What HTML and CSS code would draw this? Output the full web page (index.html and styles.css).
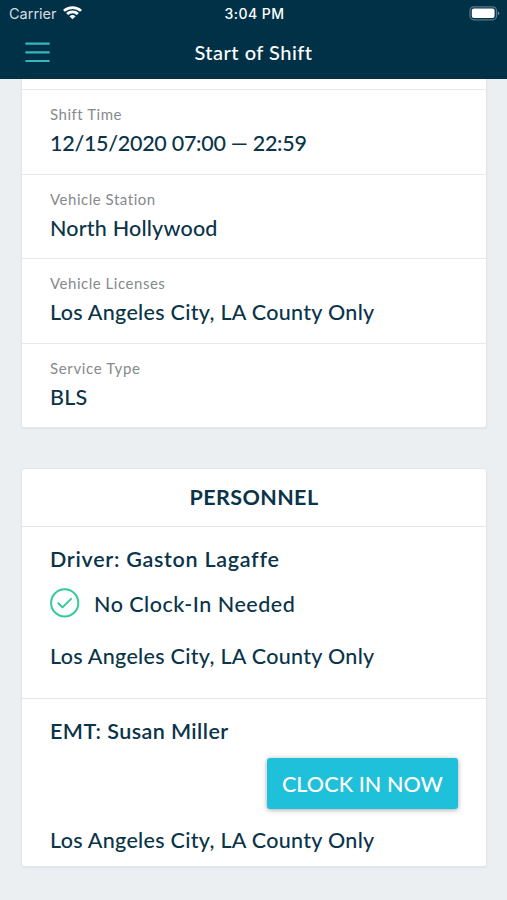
FILE: index.html
```html
<!DOCTYPE html>
<html lang="en">
<head>
<meta charset="utf-8">
<title>Start of Shift</title>
<link rel="stylesheet" href="styles.css">
</head>
<body>
<header class="header">
  <div class="status">
    <div class="carrier"><span>Carrier</span>
      <svg class="wifi" width="19" height="14" viewBox="0 0 18 14" preserveAspectRatio="none" fill="none" stroke="#fff" stroke-width="2.7"><path d="M.9 4.9a11.6 11.6 0 0 1 16.2 0M3.9 8a7.3 7.3 0 0 1 10.2 0"/><path d="M9 13.2 6.1 10.3a4.2 4.2 0 0 1 5.8 0z" fill="#fff" stroke="none"/></svg>
    </div>
    <div class="time">3:04 PM</div>
    <svg class="battery" width="31" height="15" viewBox="0 0 31 15"><rect x="1" y=".8" width="26.5" height="13" rx="3.8" fill="none" stroke="#58788a" stroke-width="1.2"/><rect x="2.8" y="2.6" width="22.8" height="9.4" rx="2" fill="#fff"/><path d="M28.8 5.2q3 2.1 0 4.2z" fill="#6f8b99"/></svg>
  </div>
  <div class="nav">
    <svg class="menu" width="25" height="21" viewBox="0 0 25 21" stroke="#35b5bd" stroke-width="2.2" stroke-linecap="round"><path d="M1.2 1.7h22.6M1.2 10.4h22.6M1.2 19h22.6"/></svg>
    <h1 class="title">Start of Shift</h1>
  </div>
</header>
<main class="content">
  <section class="card details">
    <div class="field"><div class="label">Shift Time</div><div class="value date">12/15/2020 07:00 — 22:59</div></div>
    <div class="field"><div class="label">Vehicle Station</div><div class="value place">North Hollywood</div></div>
    <div class="field"><div class="label">Vehicle Licenses</div><div class="value">Los Angeles City, LA County Only</div></div>
    <div class="field"><div class="label service">Service Type</div><div class="value place">BLS</div></div>
  </section>
  <section class="card personnel">
    <h2 class="heading">PERSONNEL</h2>
    <div class="person driver">
      <div class="name gaston">Driver: Gaston Lagaffe</div>
      <div class="clock">
        <svg width="30" height="30" viewBox="0 0 30 30" fill="none" stroke="#35cb95" stroke-width="2" stroke-linecap="round" stroke-linejoin="round"><circle cx="14.7" cy="14.9" r="13.6"/><path d="m8.3 15.3 4.2 4.1 8.6-8.5"/></svg>
        <span class="value needed">No Clock-In Needed</span>
      </div>
      <div class="value">Los Angeles City, LA County Only</div>
    </div>
    <div class="person emt">
      <div class="name">EMT: Susan Miller</div>
      <button class="button" type="button">CLOCK IN NOW</button>
      <div class="value">Los Angeles City, LA County Only</div>
    </div>
  </section>
</main>
</body>
</html>
```
FILE: styles.css
```css
* { box-sizing: border-box; }
body {
  margin: 0;
  height: 900px;
  overflow: hidden;
  background: #ebeff2;
  color: #0a3449;
  font-family: Lato, "Liberation Sans", sans-serif;
  white-space: nowrap;
}
.header { height: 79px; background: #003147; color: #fff; }
.status {
  display: grid;
  grid-template-columns: 1fr auto 1fr;
  align-items: center;
  height: 27px;
  padding: 0 7px 0 9px;
  font: 14.5px/27px Inter, sans-serif;
}
.carrier { display: flex; align-items: center; gap: 6px; color: #d5dde1; }
.wifi { margin-top: -2px; }
.time { font-size: 14px; font-weight: 500; letter-spacing: .5px; }
.battery { justify-self: end; }
.nav {
  display: grid;
  grid-template-columns: 25px 1fr 25px;
  align-items: center;
  height: 50px;
  padding: 0 25px;
}
.title { margin: 0; text-align: center; font-size: 20px; line-height: 50px; font-weight: 500; letter-spacing: .5px; }
.content { padding: 0 20px 0 21px; }
.card {
  background: #fff;
  border: 1px solid #e2e6e8;
  border-radius: 3px;
  box-shadow: 0 1px 2px rgba(0, 0, 0, .05);
}
.details { height: 349px; padding-top: 10px; border-top: 0; border-radius: 0 0 3px 3px; }
.field { height: 84.6px; padding: 14px 28px 0; border-top: 1px solid #e7eaeb; }
.label { color: #858a8d; font-size: 15px; line-height: 20px; letter-spacing: .53px; }
.service { letter-spacing: .65px; }
.value, .name { font-size: 21.5px; line-height: 30px; font-weight: 500; letter-spacing: .3px; }
.field .value { margin-top: 4px; }
.value.date { letter-spacing: -.28px; }
.value.place { letter-spacing: .2px; }
.value.needed { letter-spacing: .5px; }
.personnel { height: 399px; margin-top: 40px; }
.heading { margin: 0; height: 57px; text-align: center; font-size: 21.5px; line-height: 56px; font-weight: 700; letter-spacing: .4px; }
.person { padding: 0 28px; border-top: 1px solid #e2e6e8; }
.driver { height: 172px; padding-top: 17px; }
.name { font-weight: 600; letter-spacing: .43px; }
.gaston { letter-spacing: .71px; }
.clock { display: flex; align-items: center; gap: 14px; height: 30px; margin: 14px 0 23px; }
.needed { padding-top: 1px; }
.emt { display: flex; flex-direction: column; padding-top: 17px; }
.button {
  align-self: flex-end;
  width: 191px;
  height: 51px;
  margin: 12px 0 16px;
  padding: 0;
  border: 0;
  border-radius: 3px;
  background: #1fc0da;
  box-shadow: 0 1px 5px rgba(0, 0, 0, .35);
  color: #fff;
  font: 500 21.5px/50px Lato, sans-serif;
  letter-spacing: .1px;
}
```
